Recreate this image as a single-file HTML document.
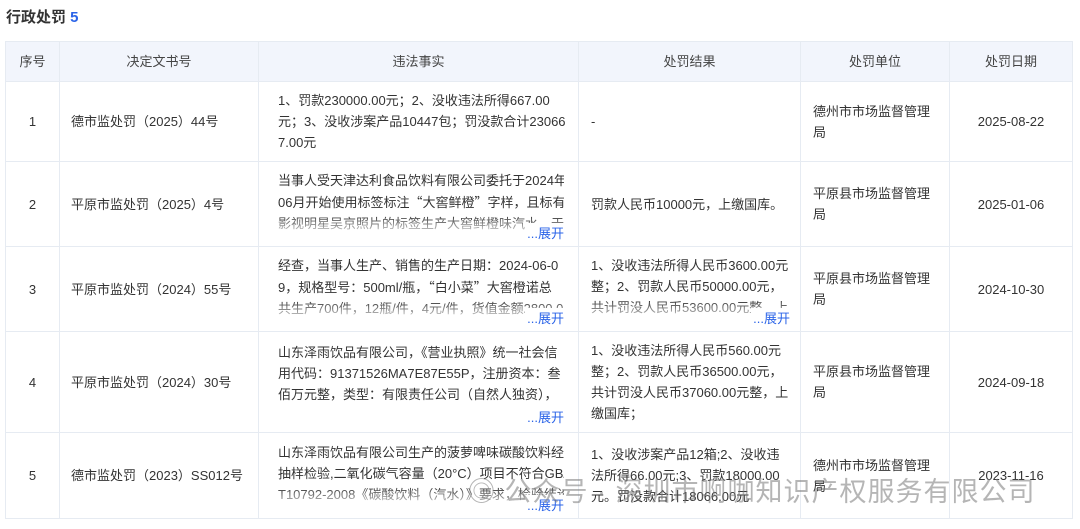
<!DOCTYPE html>
<html><head><meta charset="utf-8"><style>
*{margin:0;padding:0;box-sizing:border-box}
body{width:1080px;height:529px;background:#fff;font-family:"Liberation Sans","Noto Sans CJK SC",sans-serif;color:#333;position:relative;overflow:hidden}
h1{position:absolute;left:6px;top:6px;font-size:15px;font-weight:bold;color:#333}
h1 span{color:#2b64e8}
table{position:absolute;left:5px;top:41px;border-collapse:collapse;table-layout:fixed;width:1067px}
td,th{border:1px solid #e6ebf2;font-size:13px;line-height:21px;vertical-align:middle;font-weight:normal;word-break:break-all}
th{background:#f2f5fc;height:40px;color:#444}
td{padding:0 12px}
td.c{text-align:center}
td.n{white-space:nowrap;padding:0 11px}
td.v{padding:0 14px 0 19px;white-space:nowrap;overflow:hidden}
td.r{white-space:nowrap;overflow:hidden;padding:0 10px 0 12px}
.q{font-family:"Noto Sans CJK SC",sans-serif}
.f{position:relative;height:84px;overflow:hidden;padding-top:8px}
.f .t{height:63px;overflow:hidden;-webkit-mask-image:linear-gradient(#000 45px,rgba(0,0,0,.2) 63px)}
.f .m{position:absolute;right:0;bottom:2px;color:#2b64e8;background:#fff;padding-left:2px}
.wm{position:absolute;left:468px;top:470px;font-size:27px;color:rgba(120,120,120,.55);letter-spacing:1px;white-space:nowrap}
</style></head><body>
<h1>行政处罚 <span>5</span></h1>
<table>
<colgroup><col style="width:54px"><col style="width:199px"><col style="width:320px"><col style="width:222px"><col style="width:149px"><col style="width:123px"></colgroup>
<tr><th>序号</th><th>决定文书号</th><th>违法事实</th><th>处罚结果</th><th>处罚单位</th><th>处罚日期</th></tr>
<tr style="height:80px"><td class="c">1</td><td class="n">德市监处罚（2025）44号</td><td class="v">1、罚款230000.00元；2、没收违法所得667.00<br>元；3、没收涉案产品10447包；罚没款合计23066<br>7.00元</td><td>-</td><td>德州市市场监督管理局</td><td class="c">2025-08-22</td></tr>
<tr style="height:85px"><td class="c">2</td><td class="n">平原市监处罚（2025）4号</td><td class="v"><div class="f"><div class="t">当事人受天津达利食品饮料有限公司委托于2024年<br>06月开始使用标签标注<span class="q">“</span>大窖鲜橙<span class="q">”</span>字样，且标有<br>影视明星吴京照片的标签生产大窖鲜橙味汽水，于2</div><span class="m">...展开</span></div></td><td class="r">罚款人民币10000元，上缴国库。</td><td>平原县市场监督管理局</td><td class="c">2025-01-06</td></tr>
<tr style="height:85px"><td class="c">3</td><td class="n">平原市监处罚（2024）55号</td><td class="v"><div class="f"><div class="t">经查，当事人生产、销售的生产日期：2024-06-0<br>9，规格型号：500ml/瓶，<span class="q">“</span>白小菜<span class="q">”</span>大窖橙诺总<br>共生产700件，12瓶/件，4元/件，货值金额2800.0</div><span class="m">...展开</span></div></td><td class="r"><div class="f"><div class="t">1、没收违法所得人民币3600.00元<br>整；2、罚款人民币50000.00元，<br>共计罚没人民币53600.00元整，上</div><span class="m">...展开</span></div></td><td>平原县市场监督管理局</td><td class="c">2024-10-30</td></tr>
<tr style="height:101px"><td class="c">4</td><td class="n">平原市监处罚（2024）30号</td><td class="v"><div class="f" style="height:96px"><div class="t" style="height:84px;-webkit-mask-image:none">山东泽雨饮品有限公司，《营业执照》统一社会信<br>用代码：91371526MA7E87E55P，注册资本：叁<br>佰万元整，类型：有限责任公司（自然人独资），</div><span class="m">...展开</span></div></td><td class="r">1、没收违法所得人民币560.00元<br>整；2、罚款人民币36500.00元，<br>共计罚没人民币37060.00元整，上<br>缴国库；</td><td>平原县市场监督管理局</td><td class="c">2024-09-18</td></tr>
<tr style="height:86px"><td class="c">5</td><td class="n">德市监处罚（2023）SS012号</td><td class="v"><div class="f"><div class="t">山东泽雨饮品有限公司生产的菠萝啤味碳酸饮料经<br>抽样检验,二氧化碳气容量（20°C）项目不符合GB/<br>T10792-2008《碳酸饮料（汽水）》要求，检验结论</div><span class="m">...展开</span></div></td><td class="r">1、没收涉案产品12箱;2、没收违<br>法所得66.00元;3、罚款18000.00<br>元。罚没款合计18066.00元</td><td>德州市市场监督管理局</td><td class="c">2023-11-16</td></tr>
</table>
<div class="wm">◎ 公众号 · 深圳市啊咖知识产权服务有限公司</div>
</body></html>
